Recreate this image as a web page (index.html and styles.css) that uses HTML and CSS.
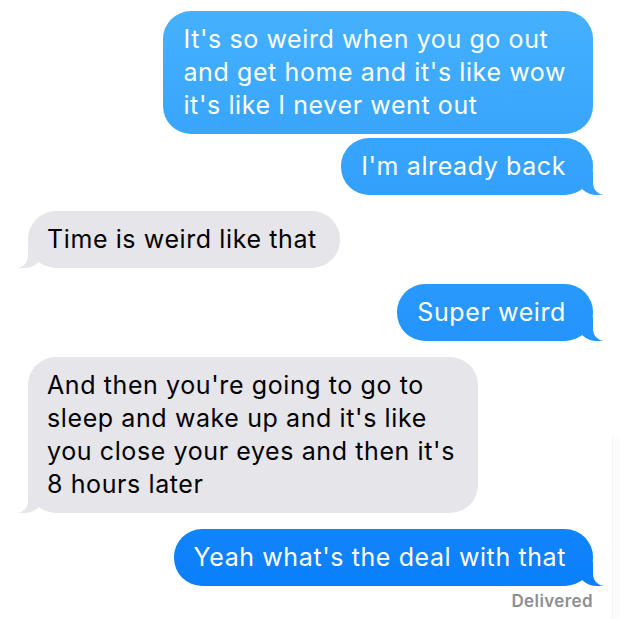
FILE: index.html
```html
<!DOCTYPE html>
<html lang="en">
<head>
<meta charset="UTF-8" />
<meta name="viewport" content="width=device-width, initial-scale=1.0" />
<title>Messages</title>
<link rel="stylesheet" href="styles.css">
</head>
<body>

<!-- Переписка -->
<div class="thread">
  <div class="msg sent">It's so weird when you go out<br>and get home and it's like wow<br>it's like I never went out</div>
  <div class="msg sent tail same">I'm already back</div>

  <div class="msg received tail">Time is weird like that</div>

  <div class="msg sent tail">Super weird</div>

  <div class="msg received tail">And then you're going to go to<br>sleep and wake up and it's like<br>you close your eyes and then it's<br>8 hours later</div>

  <div class="msg sent tail">Yeah what's the deal with that</div>
  <div class="status">Delivered</div>
</div>

<!-- светлая полоска у правого края -->
<div class="edge"></div>

</body>
</html>
```

FILE: styles.css
```css
/* Общие стили */
body {
  margin: 0;
  background: #fff;
  font-family: Inter, "Noto Sans", sans-serif;
  -webkit-font-smoothing: antialiased;
}

.thread {
  display: flex;
  flex-direction: column;
  padding: 11px 27px 0 28px;
  gap: 16px;
}

/* Пузырь сообщения */
.msg {
  position: relative;
  padding: 12px 27px 12px 20px;
  border-radius: 28px;
  font-size: 25px;
  line-height: 33px;
  letter-spacing: 0.6px;
  white-space: nowrap;
}

.sent {
  align-self: flex-end;
  color: #fff;
  background: linear-gradient(#46b1fd, #0a7ffb 590px) fixed;
}

.received {
  align-self: flex-start;
  color: #000;
  background: #e5e5ea;
  padding: 12px 23px 12px 19px;
}

/* Подряд от того же отправителя */
.same {
  margin-top: -12px;
}

/* Хвостик пузыря */
.tail::before,
.tail::after {
  content: "";
  position: absolute;
  bottom: 0;
  height: 24px;
}

.sent.tail::before {
  right: -10px;
  width: 26px;
  background: linear-gradient(#46b1fd, #0a7ffb 590px) fixed;
  border-bottom-left-radius: 20px 18px;
}

.sent.tail::after {
  right: -30px;
  width: 30px;
  background: #fff;
  border-bottom-left-radius: 12px;
}

.received.tail::before {
  left: -10px;
  width: 26px;
  background: #e5e5ea;
  border-bottom-right-radius: 20px 18px;
}

.received.tail::after {
  left: -30px;
  width: 30px;
  background: #fff;
  border-bottom-right-radius: 12px;
}

/* Статус доставки */
.status {
  align-self: flex-end;
  margin-top: -11px;
  color: #8e8e93;
  font-size: 17px;
  font-weight: 600;
  letter-spacing: 0.4px;
}

.edge {
  position: absolute;
  top: 437px;
  right: 0;
  width: 7px;
  height: 182px;
  background: #fcfcfc;
  border-left: 1px solid #f3f3f3;
}
```
